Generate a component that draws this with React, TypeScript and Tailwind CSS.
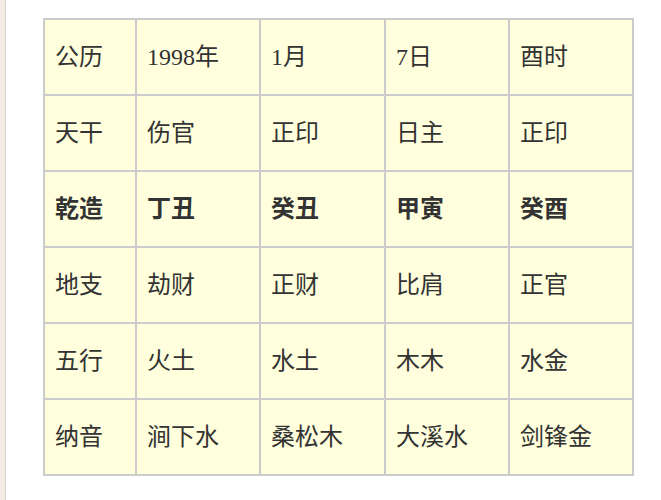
import React from 'react';

const rows: { cells: string[]; bold?: boolean }[] = [
  { cells: ['公历', '1998年', '1月', '7日', '酉时'] },
  { cells: ['天干', '伤官', '正印', '日主', '正印'] },
  { cells: ['乾造', '丁丑', '癸丑', '甲寅', '癸酉'], bold: true },
  { cells: ['地支', '劫财', '正财', '比肩', '正官'] },
  { cells: ['五行', '火土', '水土', '木木', '水金'] },
  { cells: ['纳音', '涧下水', '桑松木', '大溪水', '剑锋金'] },
];

const widths = ['w-[92px]', 'w-[124px]', 'w-[125px]', 'w-[124px]', 'w-[124px]'];

export default function App() {
  return (
    <div className="flex min-h-[500px] bg-white">
      <div className="w-[6px] bg-[#f3ece4] border-r border-[#ddd2c6]" />
      <div className="pl-[37px] pt-[18px]">
        <table
          className="table-fixed border-collapse bg-[#ffffdd] text-[#333] text-[24px]"
          style={{ fontFamily: '"Liberation Serif", "Noto Sans CJK SC", serif' }}
        >
          <tbody>
            {rows.map((row, i) => (
              <tr key={i} className="h-[76px]">
                {row.cells.map((c, j) => (
                  <td
                    key={j}
                    className={`${widths[j]} border-2 border-[#cbcbcb] pl-[10px] align-middle leading-none ${
                      row.bold ? 'font-bold' : ''
                    }`}
                  >
                    {c}
                  </td>
                ))}
              </tr>
            ))}
          </tbody>
        </table>
      </div>
    </div>
  );
}
